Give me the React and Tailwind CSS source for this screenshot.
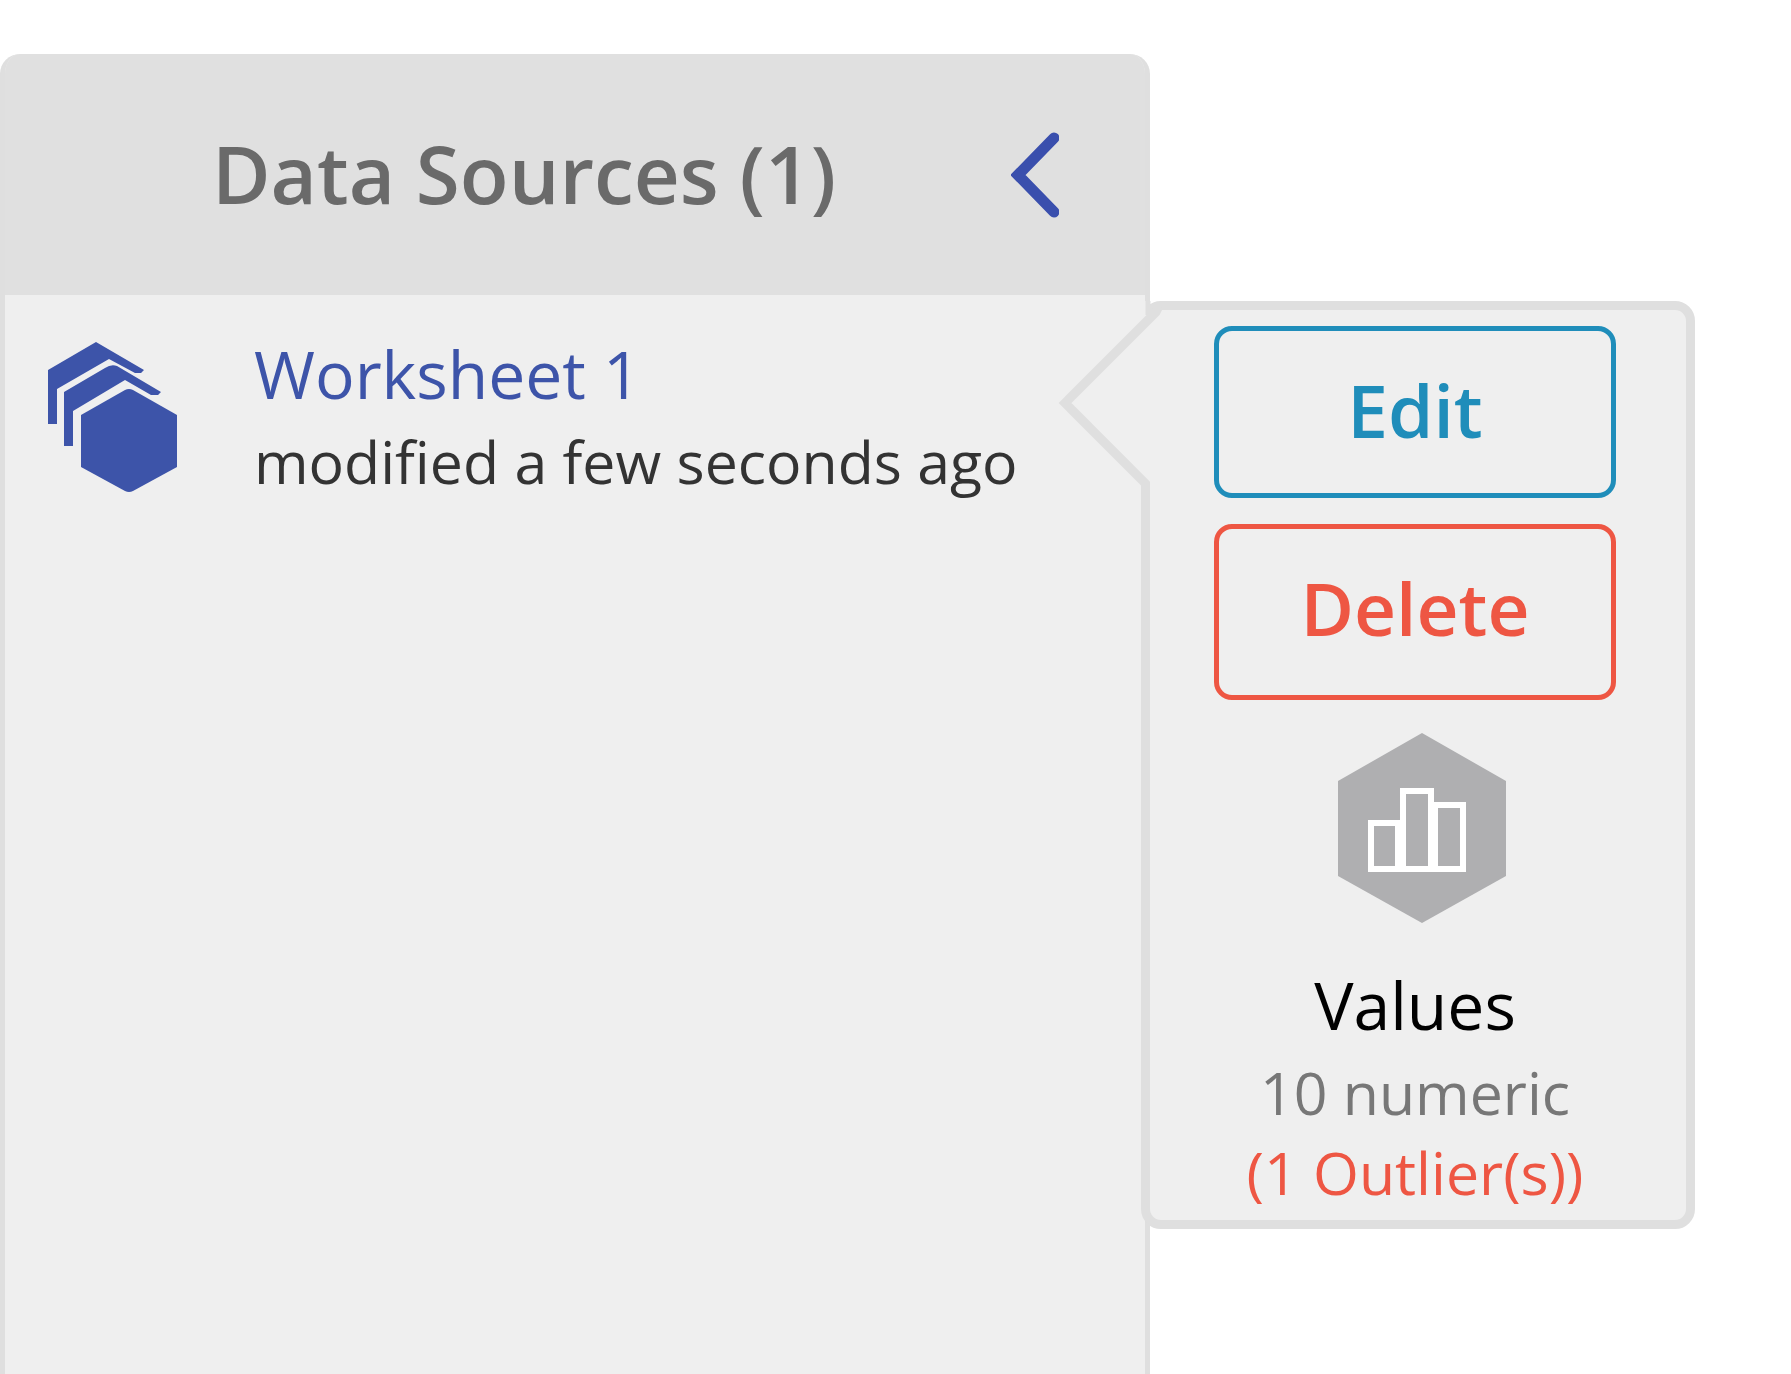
import React from 'react';

const sources = [
  { id: 1, name: 'Worksheet 1', modified: 'modified a few seconds ago' },
];

const ChevronIcon = () => (
  <svg className="w-12 h-[86px]" viewBox="0 0 48 86" fill="none" aria-hidden="true">
    <path d="M43 6 L7 43 L43 80" stroke="#3a4fad" strokeWidth="11" strokeLinecap="round" />
  </svg>
);

const WorksheetIcon = () => (
  <svg className="w-[130px] h-[152px] shrink-0" viewBox="0 0 130 152" fill="#3d54a9" aria-hidden="true">
    <path d="M0 29 L48 1 L96 29 L93 32 L87 32 L61 18 L9 48 V83 H0 Z" />
    <path d="M16 51 L57 27 Q63 23 69 25 L113 51 L110 54 L103 54 L77 39 L25 70 V105 H16 Z" />
    <path d="M33 74 L77 49 Q81 47 85 49 L129 74 V126 L85 150 Q81 152 77 150 L33 126 Z" />
  </svg>
);

const ValuesIcon = () => (
  <svg className="w-[168px] h-[192px]" viewBox="0 0 168 192" fill="none" aria-hidden="true">
    <path d="M84 1 L168 49 V144 L84 191 L0 144 V49 Z" fill="#afafb1" />
    <g stroke="#fff" strokeWidth="6">
      <rect x="33" y="91" width="27" height="46" />
      <rect x="65" y="59" width="28" height="78" />
      <rect x="97" y="73" width="28" height="64" />
    </g>
  </svg>
);

const PopoverArrow = () => (
  <svg
    className="absolute -left-[92px] -top-[9px] w-[110px] h-[200px]"
    viewBox="0 0 110 200"
    fill="none"
    aria-hidden="true"
  >
    {/* hides the popover border where the arrow opens */}
    <path d="M82 0 H92 V30 H82 Z M7 102 L99 10 H110 V192 H92 V187 Z" fill="#efefef" />
    <path d="M90 0 V14" stroke="#dfdfdf" strokeWidth="5" />
    <path d="M101 5 L98 11 L7 102 L87.5 182.5 V200" stroke="#dfdfdf" strokeWidth="9" />
  </svg>
);

const SourcePopover = () => (
  <section className="relative shrink-0 self-start w-[554px] -ml-[9px] mt-[247px] pt-4 pb-2 pl-16 pr-[70px] bg-[#efefef] border-9 border-[#dfdfdf] rounded-[20px]">
    <PopoverArrow />
    <div className="flex flex-col gap-[26px]">
      <button className="h-[172px] pb-1 border-5 border-[#1f8dba] rounded-[18px] text-[73px] font-semibold text-[#1f8dba]">
        Edit
      </button>
      <button className="h-[176px] pb-2 border-5 border-[#ee5643] rounded-[18px] text-[73px] font-semibold text-[#ee5643]">
        Delete
      </button>
    </div>
    <div className="flex flex-col items-center mt-8 text-center whitespace-nowrap">
      <div className="pl-[14px]">
        <ValuesIcon />
      </div>
      <h2 className="mt-8 text-[66px] leading-[96px] text-black">Values</h2>
      <p className="text-[59px] leading-[80px] text-[#777777]">10 numeric</p>
      <p className="text-[59px] leading-[80px] text-[#ee5643]">(1 Outlier(s))</p>
    </div>
  </section>
);

const App = () => {
  return (
    <main className="flex min-h-screen pt-[54px] pr-24 bg-white font-['Open_Sans',sans-serif]">
      <aside className="flex-1 min-w-0 border-x-5 border-[#dfdfdf] rounded-t-[20px] bg-[#efefef] overflow-hidden">
        {/* Header */}
        <header className="flex items-center h-[241px] pl-8 pr-[86px] bg-[#e0e0e0]">
          <h1 className="flex-1 pb-1 text-center text-[80px] font-semibold text-[#6a6a6a] whitespace-nowrap">
            Data Sources ({sources.length})
          </h1>
          <button aria-label="Collapse data sources">
            <ChevronIcon />
          </button>
        </header>

        {/* Source list */}
        <ul>
          {sources.map((source) => (
            <li key={source.id} className="flex gap-[76px] pl-[43px] pt-[34px] whitespace-nowrap">
              <div className="pt-3">
                <WorksheetIcon />
              </div>
              <div>
                <a href="#worksheet" className="block text-[66px] leading-[88px] text-[#3d54a9]">
                  {source.name}
                </a>
                <p className="text-[59px] leading-[88px] text-[#333333]">{source.modified}</p>
              </div>
            </li>
          ))}
        </ul>
      </aside>
      <SourcePopover />
    </main>
  );
};

export default App;
